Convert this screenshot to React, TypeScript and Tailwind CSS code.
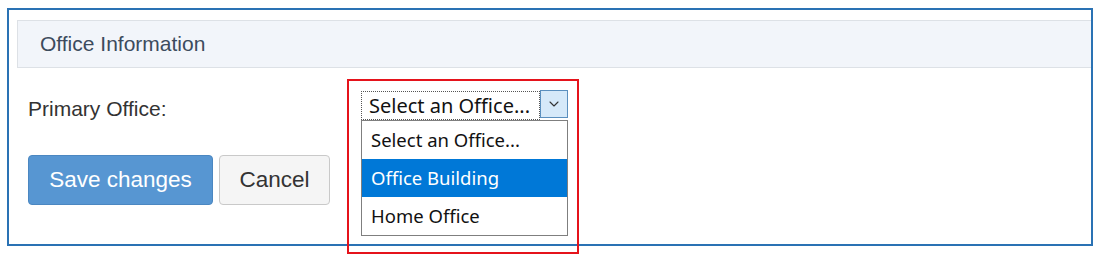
import { ChevronDown } from 'lucide-react';

const options = ['Select an Office...', 'Office Building', 'Home Office'];

// ─── Select with the open list ────────────────────────────────────────────────
function OfficeSelect() {
  return (
    <div className="relative w-[207px]">
      {/* annotation frame */}
      <div className="absolute left-[-14px] top-[-12px] w-[232px] h-[175px] border-2 border-[#e5131b] pointer-events-none z-20" />

      <div className="flex h-[29px] font-['Noto_Sans',sans-serif]">
        <div className="flex-1 flex items-center pl-[7px] border border-dotted border-[#555] text-[20px] text-[#111] leading-none">
          Select an Office...
        </div>
        <div className="w-[28px] h-[28px] mt-[-1px] flex items-center justify-center bg-[#d6e9f9] border border-[#5b8fbe]">
          <ChevronDown size={16} strokeWidth={1.6} className="text-[#333]" />
        </div>
      </div>

      <ul className="absolute left-0 top-full w-[207px] bg-white border border-[#7f7f7f] z-10 font-['Noto_Sans',sans-serif] text-[18.5px]">
        {options.map((opt, i) => (
          <li
            key={opt}
            className={`h-[38px] flex items-center pl-[9px] ${i === 1 ? 'bg-[#0078d7] text-white' : 'text-[#111]'}`}
          >
            {opt}
          </li>
        ))}
      </ul>
    </div>
  );
}

export default function App() {
  return (
    <div className="w-[1106px] h-[277px] bg-white pt-[8px] pl-[7px] font-['Liberation_Sans',Arial,sans-serif]">
      <div className="w-[1086px] h-[238px] border-2 border-[#2a72b4]">
        {/* Panel header */}
        <div className="ml-[8px] mt-[10px] h-[48px] flex items-center pl-[22px] bg-[#f2f5fa] border border-r-0 border-[#dde1e6]">
          <h3 className="text-[21px] text-[#3c4b5d]">Office Information</h3>
        </div>

        {/* Form row */}
        <div className="flex items-start pl-[19px] mt-[23px]">
          <label className="w-[333px] mt-[6px] text-[21px] leading-[24px] text-[#333]">Primary Office:</label>
          <OfficeSelect />
        </div>

        {/* Actions */}
        <div className="flex gap-[6px] pl-[19px] mt-[34px]">
          <button className="w-[185px] h-[50px] rounded-[4px] bg-[#5796d2] border border-[#4b87c1] text-white text-[22.5px]">
            Save changes
          </button>
          <button className="w-[111px] h-[50px] rounded-[4px] bg-[#f5f5f5] border border-[#c9c9c9] text-[#333] text-[22.5px]">
            Cancel
          </button>
        </div>
      </div>
    </div>
  );
}
